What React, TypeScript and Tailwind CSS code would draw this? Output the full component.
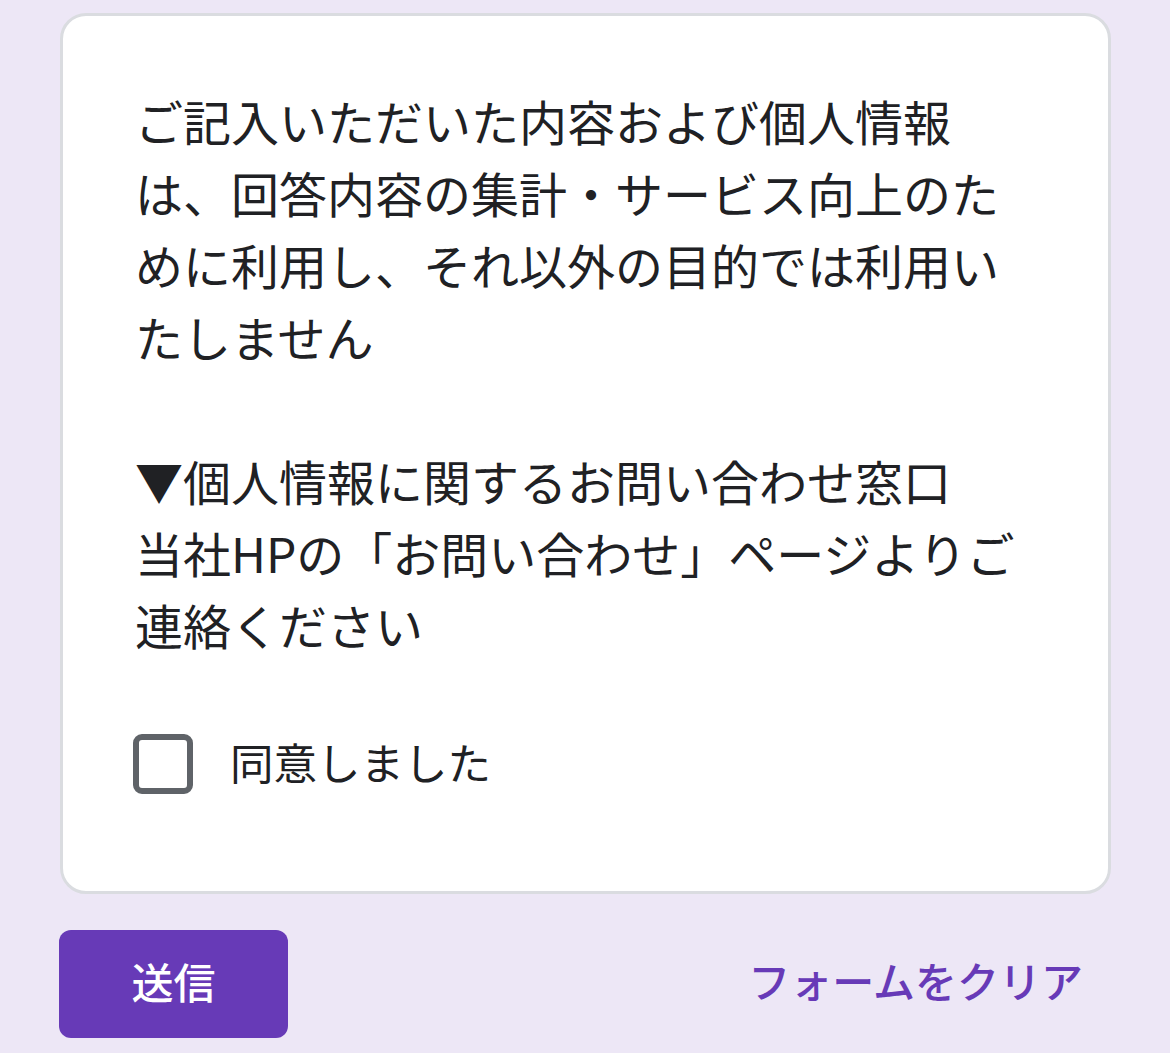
import React from "react";

export default function App() {
  const font = {
    fontFamily: '"Noto Sans CJK JP", "Noto Sans", sans-serif',
  };
  return (
    <div
      className="min-h-[1053px] w-[1170px] bg-[#ede7f6] pt-[13px] pl-[60px] pr-[59px]"
      style={font}
    >
      <div className="rounded-[26px] border-[3px] border-[#dadce0] bg-white pl-[72px] pr-[72px] pt-[68px] pb-[97px]">
        <div className="whitespace-pre-line text-[48px] leading-[72px] text-[#202124]">
          {"ご記入いただいた内容および個人情報は、回答内容の集計・サービス向上のために利用し、それ以外の目的では利用いたしません\n\n▼個人情報に関するお問い合わせ窓口\n当社HPの「お問い合わせ」ページよりご連絡ください"}
        </div>
        <div className="mt-[74px] flex items-center">
          <div className="h-[60px] w-[60px] shrink-0 rounded-[9px] border-[6px] border-[#5f6368] -ml-[2px]" />
          <div className="ml-[37px] pb-[4px] text-[43.5px] leading-[56px] text-[#202124]">
            同意しました
          </div>
        </div>
      </div>
      <div className="mt-[36px] flex items-center justify-between">
        <button className="flex h-[108px] w-[229px] items-center justify-center rounded-[12px] bg-[#673ab7] pb-[8px] text-[42px] font-medium text-white -ml-[1px]">
          送信
        </button>
        <div className="mr-[28px] pb-[10px] text-[42px] font-medium text-[#673ab7]">
          フォームをクリア
        </div>
      </div>
    </div>
  );
}
